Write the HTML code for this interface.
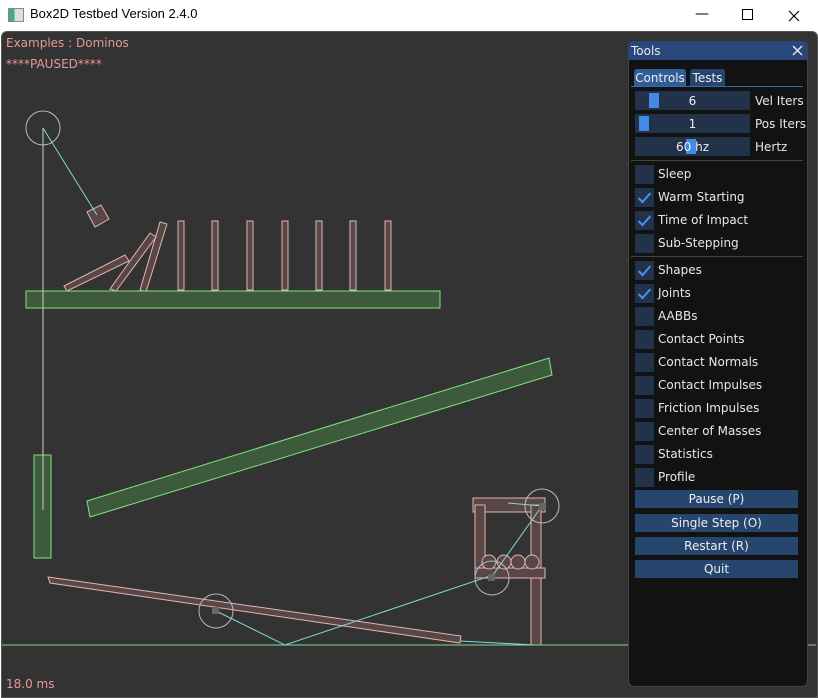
<!DOCTYPE html><html><head><style>
body{margin:0;width:818px;height:698px;overflow:hidden;background:#fff;font-family:"DejaVu Sans","Liberation Sans",sans-serif;position:relative}
.t{position:absolute;white-space:nowrap}
.cb{position:absolute;left:635px;width:19px;height:19px;background:#213249}
.cb svg{position:absolute;left:0;top:0}
.lb{position:absolute;left:658px;font-size:12px;color:#e8e8e8}
.btn{position:absolute;left:635px;width:163px;height:18px;background:#26466e;color:#eee;font-size:12px;text-align:center;line-height:19px}
.sl{position:absolute;left:635px;width:115px;height:19px;background:#213249;color:#eee;font-size:12px;text-align:center;line-height:20px}
.sl i{position:absolute;top:2px;width:10px;height:15px;background:#4289e8}
</style></head><body>
<div class="t" style="left:8px;top:8px;width:14px;height:12px;border:1px solid #888;background:linear-gradient(90deg,#4a7 0 40%,#ddd 40%)"></div>
<div class="t" style="left:30px;top:6px;font-size:13px;color:#000;font-family:'Liberation Sans',sans-serif">Box2D Testbed Version 2.4.0</div>
<div class="t" style="left:695px;top:6px;font-size:14px">&#8212;</div>
<div class="t" style="left:742px;top:9px;width:9px;height:9px;border:1px solid #000"></div>
<svg class="t" style="left:788px;top:10px" width="12" height="12"><path d="M1 1L11 11M11 1L1 11" stroke="#000" stroke-width="1.2"/></svg>
<div class="t" style="left:1px;top:31px;width:815px;height:665px;background:#333;border:1px solid #555;border-radius:6px 6px 0 0"></div>
<svg class="t" style="left:0;top:0" width="818" height="698">
<g fill="#594747" stroke="#e6b3b3" stroke-width="1">
<rect x="178" y="221" width="6" height="69"/><rect x="212" y="221" width="6" height="69"/><rect x="247" y="221" width="6" height="69"/><rect x="282" y="221" width="6" height="69"/><rect x="316" y="221" width="6" height="69"/><rect x="350" y="221" width="6" height="69"/><rect x="385" y="221" width="6" height="69"/>
<polygon points="140,290 146,292 167,224 160,222"/>
<polygon points="110,289 116,291 156,237 150,233"/>
<polygon points="64,286 67,291 129,261 125,255"/>
<polygon points="87,212 101,205 109,219 95,227"/>
<polygon points="48,577 50,583 460,643 461,636"/>
<rect x="473" y="498" width="72" height="14"/><rect x="475" y="505" width="10" height="70"/><rect x="531" y="505" width="10" height="140"/><rect x="475" y="568" width="70" height="10"/>
<circle cx="489" cy="562" r="7"/><circle cx="504" cy="562" r="7"/><circle cx="518" cy="562" r="7"/><circle cx="532" cy="562" r="7"/>
</g>
<g fill="#3d5a3d" stroke="#80e680">
<rect x="26" y="291" width="414" height="17"/>
<rect x="34" y="455" width="17" height="103"/>
<polygon points="87,501 549,358 552,375 90,517"/>
</g>
<g stroke="#7fd9d9" fill="none"><line x1="43" y1="128" x2="97" y2="215"/><polyline points="216,611 285,645 493,575 542,506"/><line x1="460" y1="641" x2="535" y2="645"/><line x1="508" y1="503" x2="542" y2="506"/></g>
<line x1="43" y1="128" x2="43" y2="510" stroke="#ccc"/>
<g stroke="#bbb" fill="none"><circle cx="43" cy="128" r="17"/><circle cx="216" cy="611" r="17"/><circle cx="542" cy="506" r="17"/><circle cx="492" cy="578" r="17"/></g>
<g fill="#666"><rect x="488" y="574" width="7" height="7"/><rect x="539" y="503" width="7" height="7"/><rect x="212" y="607" width="7" height="7"/></g>
<line x1="2" y1="645" x2="816" y2="645" stroke="#8ad98a"/>
</svg>
<div class="t" style="left:6px;top:36px;font-size:12px;color:#e69999">Examples : Dominos</div>
<div class="t" style="left:6px;top:57px;font-size:12px;color:#e69999">****PAUSED****</div>
<div class="t" style="left:6px;top:677px;font-size:12px;color:#e69999">18.0 ms</div>
<div class="t" style="left:628px;top:41px;width:178px;height:644px;background:#121212;border:1px solid #444;border-radius:6px"></div>
<div class="t" style="left:628px;top:41px;width:179px;height:19px;background:#29487a;border-radius:6px 6px 0 0"></div>
<div class="t" style="left:631px;top:44px;font-size:12px;color:#eee">Tools</div>
<svg class="t" style="left:792px;top:45px" width="11" height="11"><path d="M1 1L10 10M10 1L1 10" stroke="#eee" stroke-width="1.3"/></svg>
<div class="t" style="left:634px;top:69px;width:52px;height:17px;background:#2f5d96;border-radius:3px 3px 0 0;color:#eee;font-size:12px;text-align:center;line-height:18px">Controls</div>
<div class="t" style="left:690px;top:69px;width:35px;height:17px;background:#26456e;border-radius:3px 3px 0 0;color:#eee;font-size:12px;text-align:center;line-height:18px">Tests</div>
<div class="t" style="left:631px;top:86px;width:172px;height:1px;background:#3a6aa5"></div>
<div class="sl" style="top:91px"><i style="left:14px"></i><span style="position:relative">6</span></div><div class="lb" style="top:94px;left:755px">Vel Iters</div>
<div class="sl" style="top:114px"><i style="left:4px"></i><span style="position:relative">1</span></div><div class="lb" style="top:117px;left:755px">Pos Iters</div>
<div class="sl" style="top:137px"><i style="left:51px"></i><span style="position:relative">60 hz</span></div><div class="lb" style="top:140px;left:755px">Hertz</div>
<div class="t" style="left:631px;top:160px;width:172px;height:1px;background:#444"></div>
<div class="t" style="left:631px;top:256px;width:172px;height:1px;background:#444"></div>
<div class="cb" style="top:165px"></div><div class="lb" style="top:167px">Sleep</div>
<div class="cb" style="top:188px"><svg width="19" height="19"><path d="M3.5 10L7.5 14L15.5 5" stroke="#4a90f0" stroke-width="2" fill="none"/></svg></div><div class="lb" style="top:190px">Warm Starting</div>
<div class="cb" style="top:211px"><svg width="19" height="19"><path d="M3.5 10L7.5 14L15.5 5" stroke="#4a90f0" stroke-width="2" fill="none"/></svg></div><div class="lb" style="top:213px">Time of Impact</div>
<div class="cb" style="top:234px"></div><div class="lb" style="top:236px">Sub-Stepping</div>
<div class="cb" style="top:261px"><svg width="19" height="19"><path d="M3.5 10L7.5 14L15.5 5" stroke="#4a90f0" stroke-width="2" fill="none"/></svg></div><div class="lb" style="top:263px">Shapes</div>
<div class="cb" style="top:284px"><svg width="19" height="19"><path d="M3.5 10L7.5 14L15.5 5" stroke="#4a90f0" stroke-width="2" fill="none"/></svg></div><div class="lb" style="top:286px">Joints</div>
<div class="cb" style="top:307px"></div><div class="lb" style="top:309px">AABBs</div>
<div class="cb" style="top:330px"></div><div class="lb" style="top:332px">Contact Points</div>
<div class="cb" style="top:353px"></div><div class="lb" style="top:355px">Contact Normals</div>
<div class="cb" style="top:376px"></div><div class="lb" style="top:378px">Contact Impulses</div>
<div class="cb" style="top:399px"></div><div class="lb" style="top:401px">Friction Impulses</div>
<div class="cb" style="top:422px"></div><div class="lb" style="top:424px">Center of Masses</div>
<div class="cb" style="top:445px"></div><div class="lb" style="top:447px">Statistics</div>
<div class="cb" style="top:468px"></div><div class="lb" style="top:470px">Profile</div>
<div class="btn" style="top:490px">Pause (P)</div>
<div class="btn" style="top:514px">Single Step (O)</div>
<div class="btn" style="top:537px">Restart (R)</div>
<div class="btn" style="top:560px">Quit</div>
</body></html>
